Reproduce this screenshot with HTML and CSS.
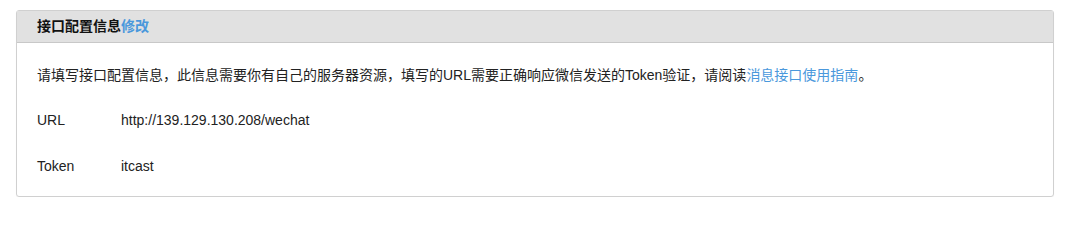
FILE: index.html
```html
<!DOCTYPE html>
<html lang="zh">
<head>
<meta charset="utf-8">
<link rel="stylesheet" href="styles.css">
</head>
<body>
<div class="panel">
  <div class="panel-heading">接口配置信息<a class="link" href="#">修改</a></div>
  <div class="panel-body">
    <p class="intro">请填写接口配置信息，此信息需要你有自己的服务器资源，填写的URL需要正确响应微信发送的Token验证，请阅读<a class="link" href="#">消息接口使用指南</a>。</p>
    <div class="row row-first"><span class="label">URL</span><span class="value">http://139.129.130.208/wechat</span></div>
    <div class="row"><span class="label">Token</span><span class="value">itcast</span></div>
  </div>
</div>
</body>
</html>
```
FILE: styles.css
```css
html, body {
  margin: 0;
  padding: 0;
  background: #fff;
}
body {
  font-family: "Liberation Sans", Arial, "Noto Sans CJK SC", sans-serif;
  font-size: 14px;
  color: #222;
}
.panel {
  margin: 10px 19px 0 16px;
  border: 1px solid #d0d0d0;
  border-radius: 3px;
  box-shadow: 0 1px 1px rgba(0,0,0,0.05);
}
.panel-heading {
  background: #e1e1e1;
  border-bottom: 1px solid #c8c8c8;
  height: 31px;
  line-height: 31px;
  padding: 0 20px;
  font-weight: bold;
  color: #111;
}
.link {
  color: #4a98dc;
  text-decoration: none;
}
.panel-body {
  padding: 22px 20px 20px 20px;
}
.intro {
  margin: 0;
  line-height: 20px;
}
.row {
  display: flex;
  line-height: 20px;
  margin-top: 26px;
}
.row-first {
  margin-top: 25px;
}
.label {
  width: 84px;
}
```
